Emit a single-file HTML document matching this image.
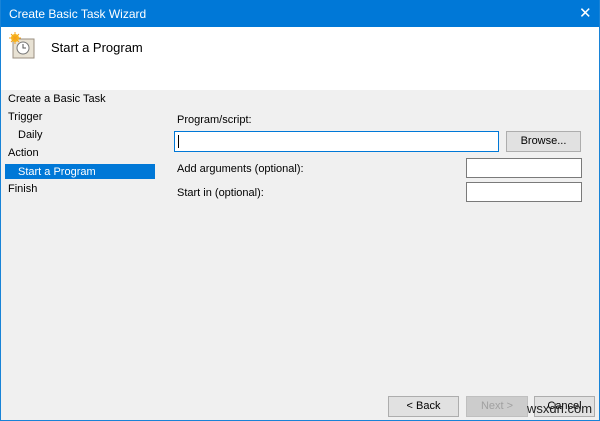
<!DOCTYPE html><html><head><style>
body{margin:0;width:600px;height:421px;overflow:hidden;font-family:"Liberation Sans",sans-serif;font-size:11px;color:#000}
.win{position:absolute;left:0;top:0;width:598px;height:420px;border:1px solid #1883d7;border-top:none;background:#f0f0f0}
.title{position:absolute;left:0;top:0;width:598px;height:27px;background:#0078d7;color:#fff;font-size:12px}
.hdr{position:absolute;left:0;top:27px;width:598px;height:63px;background:#fff}
.t{position:absolute;white-space:nowrap}
.in{position:absolute;background:#fff;border:1px solid #7a7a7a;box-sizing:border-box}
.btn{position:absolute;background:#e1e1e1;border:1px solid #adadad;box-sizing:border-box;text-align:center;line-height:19px}
</style></head><body><div class="win">
<div class="title"><span class="t" style="left:8px;top:7px">Create Basic Task Wizard</span><span class="t" style="left:578px;top:4px;font-size:15px">✕</span></div>
<div class="hdr">
<svg style="position:absolute;left:6px;top:5px" width="30" height="28"><rect x="6" y="7" width="21" height="19" fill="#e8e2d4" stroke="#9a8f80"/><circle cx="16" cy="16" r="6" fill="#fff" stroke="#777"/><path d="M16 12v4h3" stroke="#555" fill="none"/><circle cx="8" cy="6" r="4" fill="#f6c21c"/><path d="M8 0v12M2 6h12M4 2l8 8M12 2l-8 8" stroke="#f6a01c"/></svg>
<span class="t" style="left:50px;top:13px;font-size:13px">Start a Program</span></div>
<span class="t" style="left:7px;top:93px">Create a Basic Task</span>
<span class="t" style="left:7px;top:111px">Trigger</span>
<span class="t" style="left:17px;top:129px">Daily</span>
<span class="t" style="left:7px;top:147px">Action</span>
<div style="position:absolute;left:4px;top:164px;width:150px;height:15px;background:#0078d7"></div>
<span class="t" style="left:17px;top:166px;color:#fff">Start a Program</span>
<span class="t" style="left:7px;top:183px">Finish</span>
<span class="t" style="left:176px;top:114px">Program/script:</span>
<div class="in" style="left:173px;top:131px;width:325px;height:21px;border-color:#0078d7"><div style="position:absolute;left:3px;top:3px;width:1px;height:13px;background:#000"></div></div>
<div class="btn" style="left:505px;top:131px;width:75px;height:21px">Browse...</div>
<span class="t" style="left:176px;top:163px">Add arguments (optional):</span>
<div class="in" style="left:465px;top:158px;width:116px;height:20px"></div>
<span class="t" style="left:176px;top:187px">Start in (optional):</span>
<div class="in" style="left:465px;top:182px;width:116px;height:20px"></div>
<div class="btn" style="left:387px;top:396px;width:71px;height:21px">&lt; Back</div>
<div class="btn" style="left:465px;top:396px;width:62px;height:21px;color:#a0a0a0;background:#ccc;border-color:#bfbfbf">Next &gt;</div>
<div class="btn" style="left:533px;top:396px;width:61px;height:21px">Cancel</div>
<span class="t" style="left:526px;top:401px;font-size:13px;color:#222">wsxdn.com</span>
</div></body></html>
